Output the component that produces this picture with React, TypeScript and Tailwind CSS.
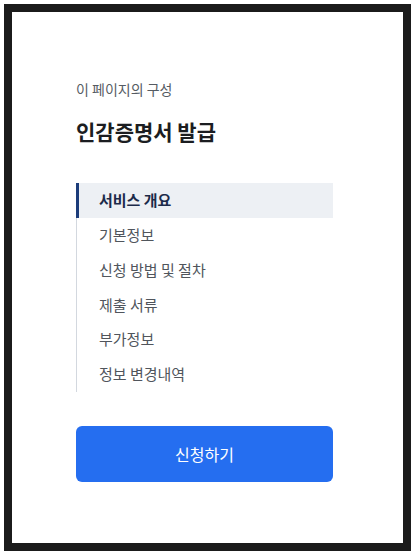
const items = ["서비스 개요", "기본정보", "신청 방법 및 절차", "제출 서류", "부가정보", "정보 변경내역"];

export default function App() {
  return (
    <div
      className="min-h-[553px] bg-white pl-[4px] pt-[4px]"
      style={{ fontFamily: '"Noto Sans CJK KR", "Noto Sans", sans-serif' }}
    >
      <div className="h-[547px] w-[407px] border-[8px] border-[#1b1b1b] bg-white">
        <div className="ml-[64px] w-[257px] pt-[67px]">
          <p className="text-[14px] leading-[20px] text-[#555b63]">이 페이지의 구성</p>
          <h1 className="mt-[18px] text-[21px] font-bold leading-[28px] text-[#1b1d21]">인감증명서 발급</h1>

          <nav className="mt-[38px] border-l border-[#d3d8df]">
            <ul>
              {items.map((item, i) => (
                <li key={item}>
                  <a
                    href="#"
                    className={
                      i === 0
                        ? "-ml-px flex h-[34.8px] items-center border-l-[3px] border-[#1c3c7a] bg-[#edf0f4] pl-[20px] text-[15px] font-bold text-[#1c2b4a]"
                        : "flex h-[34.8px] items-center pl-[22px] text-[15px] text-[#50555c]"
                    }
                  >
                    {item}
                  </a>
                </li>
              ))}
            </ul>
          </nav>

          <button
            type="button"
            className="mt-[34px] flex h-[56px] w-full items-center justify-center rounded-[6px] bg-[#256ef0] text-[16px] font-normal text-white"
          >
            신청하기
          </button>
        </div>
      </div>
    </div>
  );
}
